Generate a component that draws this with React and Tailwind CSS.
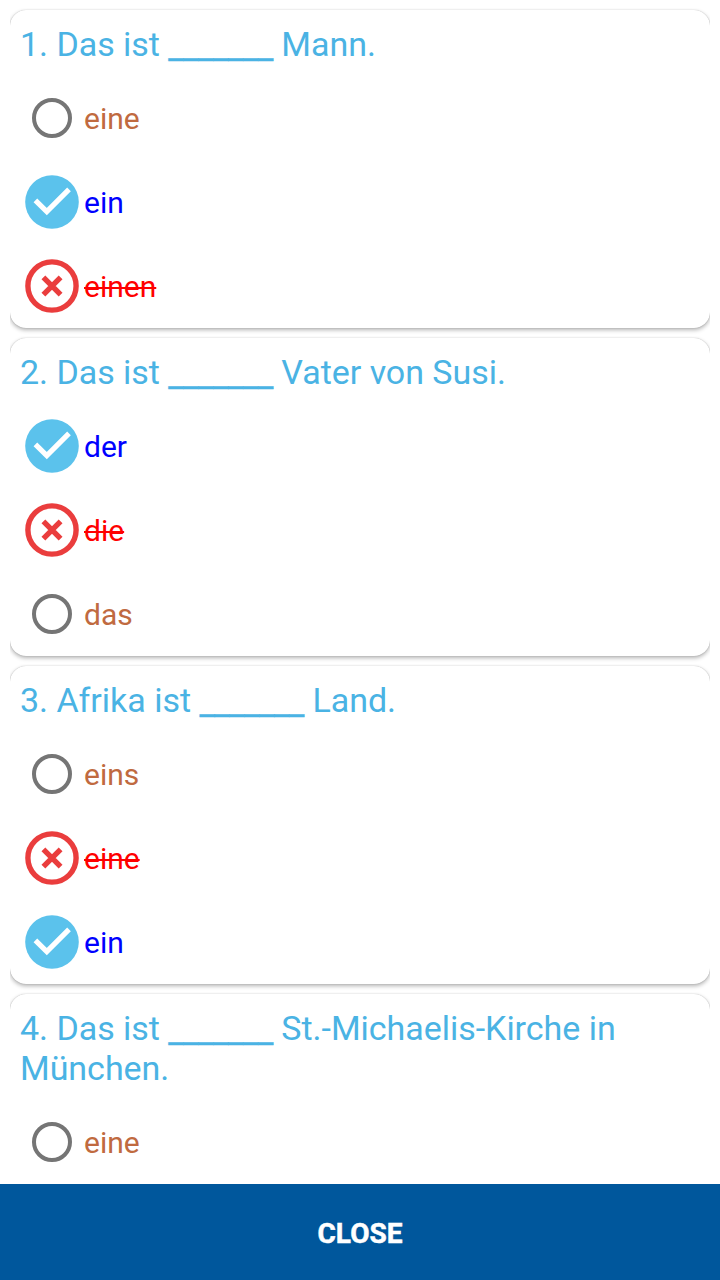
import React from "react";

const questions = [
  {
    before: "1. Das ist",
    after: "Mann.",
    answers: [
      { label: "eine", state: "empty" },
      { label: "ein", state: "correct" },
      { label: "einen", state: "wrong" },
    ],
  },
  {
    before: "2. Das ist",
    after: "Vater von Susi.",
    answers: [
      { label: "der", state: "correct" },
      { label: "die", state: "wrong" },
      { label: "das", state: "empty" },
    ],
  },
  {
    before: "3. Afrika ist",
    after: "Land.",
    answers: [
      { label: "eins", state: "empty" },
      { label: "eine", state: "wrong" },
      { label: "ein", state: "correct" },
    ],
  },
  {
    before: "4. Das ist",
    after: "St.-Michaelis-Kirche in München.",
    answers: [{ label: "eine", state: "empty" }],
  },
];

const labelStyles = {
  empty: "text-[#c06a40]",
  correct: "text-[#0000ff]",
  wrong: "text-[#ff0000] line-through decoration-2",
};

const AnswerIcon = ({ state }) => {
  if (state === "correct") {
    return (
      <svg className="w-16 h-16 shrink-0" viewBox="0 0 64 64" fill="none">
        <circle cx="32" cy="32" r="26.8" fill="#5bc2ec" />
        <path d="M15.4 30.4L26.8 41.6L49 19.4" stroke="#fff" strokeWidth="5.2" />
      </svg>
    );
  }
  if (state === "wrong") {
    return (
      <svg className="w-16 h-16 shrink-0" viewBox="0 0 64 64" fill="none" stroke="#ea3d3d">
        <circle cx="32" cy="32" r="24.1" strokeWidth="5.4" />
        <path d="M23.4 23.4L40.6 40.6M40.6 23.4L23.4 40.6" strokeWidth="5.4" />
      </svg>
    );
  }
  return (
    <svg className="w-16 h-16 shrink-0" viewBox="0 0 64 64" fill="none">
      <circle cx="32" cy="32" r="18" stroke="#757575" strokeWidth="4" />
    </svg>
  );
};

const QuestionCard = ({ question }) => (
  <div className="shrink-0 rounded-[16px] bg-white px-[10px] pt-[14px] shadow-[0_0_1px_rgba(0,0,0,0.28),0_2px_4px_rgba(0,0,0,0.3)] [clip-path:inset(-2px_0_-8px_0)] last:pb-10">
    <h2 className="text-[34px] leading-[40px] tracking-[-0.03px] text-[#4ab3e4]">
      {question.before}{" "}
      <span className="inline-block translate-y-[3px] tracking-[-0.4px] [-webkit-text-stroke:0.4px]">
        _______
      </span>{" "}
      {question.after}
    </h2>
    <div className="pt-[12px]">
      {question.answers.map((answer) => (
        <div key={answer.label} className="flex h-[84px] items-center">
          <AnswerIcon state={answer.state} />
          <span className={`pt-[2px] text-[30px] leading-[36px] ${labelStyles[answer.state]}`}>
            {answer.label}
          </span>
        </div>
      ))}
    </div>
  </div>
);

const App = () => {
  return (
    <div className="flex h-screen flex-col overflow-hidden bg-white font-[Roboto,sans-serif]">
      <div className="flex min-h-0 flex-1 flex-col gap-[10px] overflow-hidden p-[10px]">
        {questions.map((question) => (
          <QuestionCard key={question.before} question={question} />
        ))}
      </div>
      <button className="h-24 shrink-0 bg-[#00579c] pt-1 text-[28px] font-bold text-white [-webkit-text-stroke:0.5px]">
        CLOSE
      </button>
    </div>
  );
};

export default App;
